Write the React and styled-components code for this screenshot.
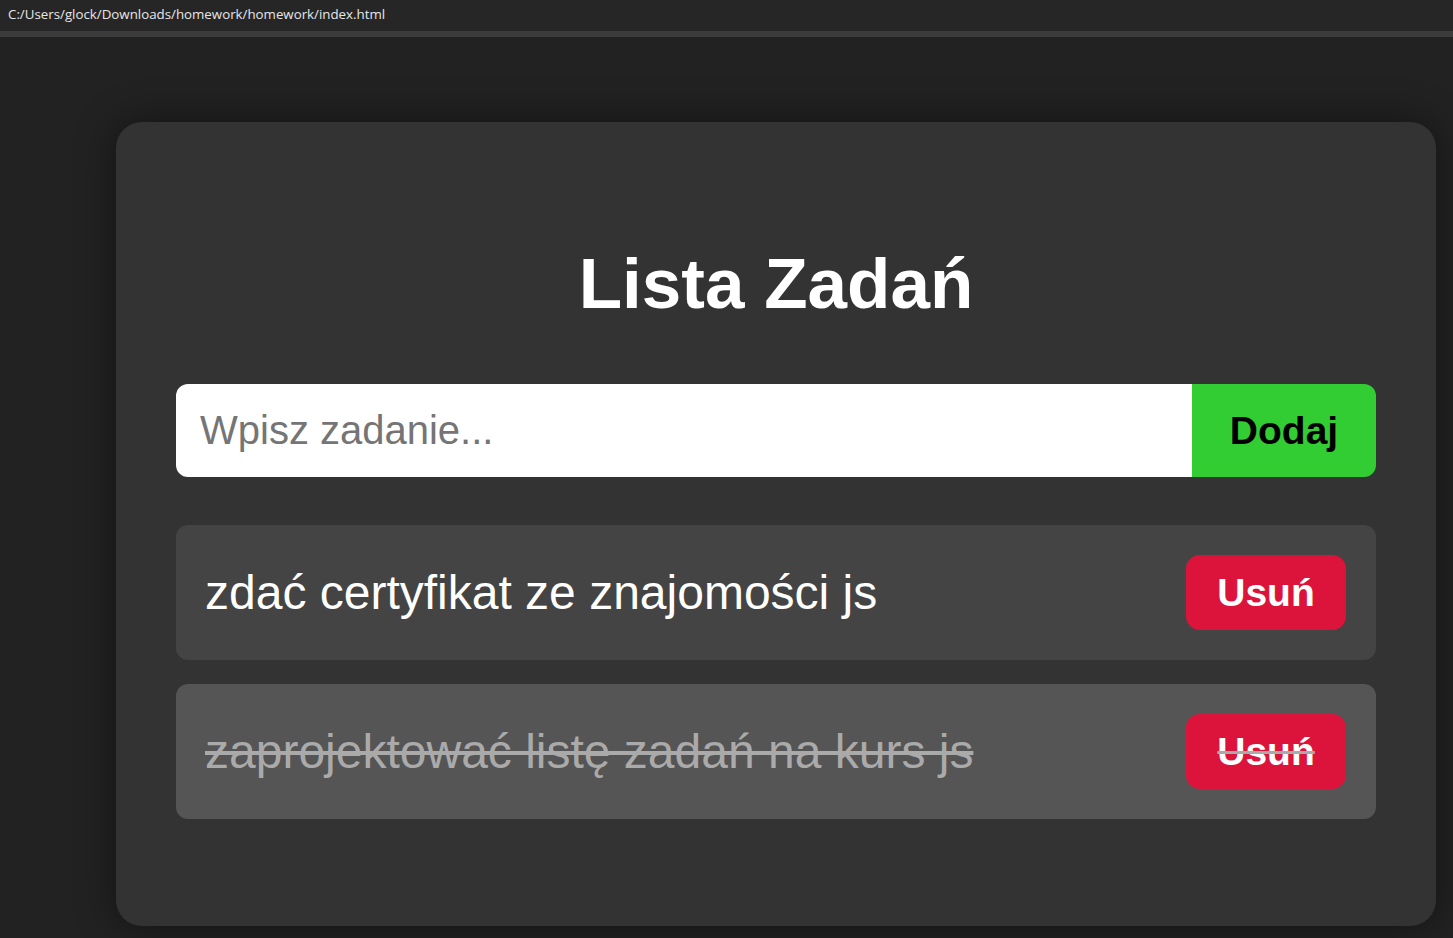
import styled, { createGlobalStyle } from "styled-components"

const Global = createGlobalStyle`
    html, body {
        margin: 0;
        padding: 0;
        background-color: #222222;
    }
    body {
        font-family: "Liberation Sans", Arial, sans-serif;
    }
`

const tasks = [
    { id: 1, title: 'zdać certyfikat ze znajomości js', done: false },
    { id: 2, title: 'zaprojektować listę zadań na kurs js', done: true },
]

const App = () => {
    return (
        <>
            <Global />
            <PathBar>C:/Users/glock/Downloads/homework/homework/index.html</PathBar>
            <Divider />
            <Page>
                <Card>
                    <Title>Lista Zadań</Title>
                    <Form>
                        <Input type='text' placeholder='Wpisz zadanie...' />
                        <AddButton>Dodaj</AddButton>
                    </Form>
                    <List>
                        {tasks.map(task =>
                            <Item key={task.id} $done={task.done}>
                                <span>{task.title}</span>
                                <DeleteButton>Usuń</DeleteButton>
                            </Item>
                        )}
                    </List>
                </Card>
            </Page>
        </>
    )
}

export default App

const PathBar = styled.div`
    height: 31px;
    background-color: #262626;
    color: #e6e6e6;
    font-family: "Open Sans", "Noto Sans", sans-serif;
    font-size: 13.3px;
    line-height: 29px;
    padding-left: 8px;
`
const Divider = styled.div`
    height: 6px;
    background-color: #3c3c3c;
`
const Page = styled.div`
    padding: 85px 17px 12px 116px;
`
const Card = styled.div`
    width: 1320px;
    height: 804px;
    box-sizing: border-box;
    background-color: #333333;
    border-radius: 26px;
    box-shadow: 0 0 40px rgba(0, 0, 0, 0.45);
    padding: 118px 60px 0;
`
const Title = styled.h1`
    margin: 0;
    text-align: center;
    color: #ffffff;
    font-size: 71px;
    font-weight: bold;
    line-height: 88px;
`
const Form = styled.div`
    display: flex;
    margin-top: 56px;
    height: 93px;
`
const Input = styled.input`
    flex: 1;
    border: none;
    outline: none;
    border-radius: 12px 0 0 12px;
    padding: 0 24px;
    font-family: "Liberation Sans", Arial, sans-serif;
    font-size: 40px;
    color: #222;
    background-color: #ffffff;

    &::placeholder {
        color: #757575;
    }
`
const AddButton = styled.button`
    width: 184px;
    border: none;
    border-radius: 0 12px 12px 0;
    background-color: #32cd32;
    color: #000000;
    font-family: "Liberation Sans", Arial, sans-serif;
    font-size: 39px;
    font-weight: bold;
`
const List = styled.div`
    display: flex;
    flex-direction: column;
    gap: 24px;
    margin-top: 48px;
`
const Item = styled.div`
    display: flex;
    align-items: center;
    justify-content: space-between;
    height: 135px;
    box-sizing: border-box;
    padding: 0 30px 0 29px;
    border-radius: 12px;
    font-size: 48px;
    background-color: ${p => p.$done ? '#555555' : '#444444'};
    color: ${p => p.$done ? '#aaaaaa' : '#ffffff'};
    text-decoration: ${p => p.$done ? 'line-through' : 'none'};
`
const DeleteButton = styled.button`
    width: 160px;
    height: 75px;
    border: none;
    border-radius: 14px;
    background-color: #dc143c;
    color: #ffffff;
    font-family: "Liberation Sans", Arial, sans-serif;
    font-size: 39px;
    font-weight: bold;
`
